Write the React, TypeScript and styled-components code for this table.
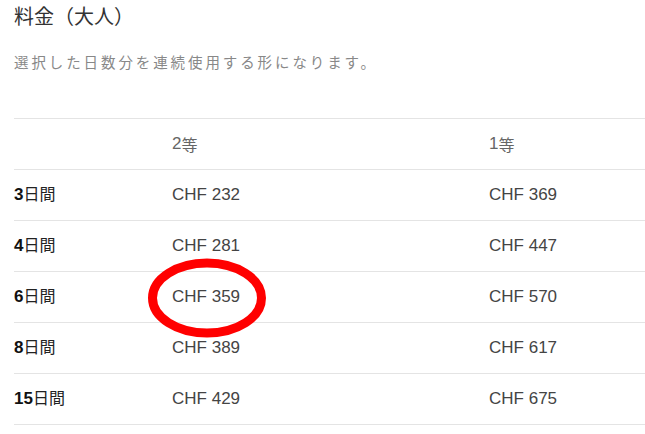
import React from "react";
import styled, { createGlobalStyle } from "styled-components";

const Global = createGlobalStyle`
  html, body { margin: 0; padding: 0; background: #fff; }
  body { font-family: "Liberation Sans", "Noto Sans CJK JP", sans-serif; }
`;

const Page = styled.div`
  padding: 0 0 0 14px;
  width: 645px;
  box-sizing: border-box;
`;

const Title = styled.h2`
  margin: 0;
  padding-top: 2px;
  font-family: "Noto Sans CJK JP", sans-serif;
  font-weight: 400;
  font-size: 20px;
  line-height: 28px;
  color: #333;
`;

const Lead = styled.p`
  margin: 20px 0 0;
  font-family: "Noto Sans CJK JP", sans-serif;
  font-size: 14.5px;
  line-height: 24px;
  letter-spacing: 2.9px;
  color: #888;
`;

const Table = styled.div`
  margin-top: 44px;
  display: grid;
  grid-template-columns: 158px 317px 1fr;
  border-top: 1px solid #e4e4e4;
`;

const Cell = styled.div<{ $head?: boolean }>`
  position: relative;
  height: 50px;
  display: flex;
  align-items: center;
  border-bottom: 1px solid #e4e4e4;
  font-family: "Liberation Sans", "Noto Sans CJK JP", sans-serif;
  font-size: 17px;
  line-height: 20px;
  color: ${(p) => (p.$head ? "#666" : "#444")};
`;

const Jp = styled.span`
  font-family: "Noto Sans CJK JP", sans-serif;
  font-size: 16px;
  line-height: 20px;
`;

const Num = styled.b`
  font-weight: 700;
  color: #111;
`;

const Label = styled.span`
  color: #222;
  line-height: 20px;
  margin-top: -3px;
`;

const Circle = styled.svg`
  position: absolute;
  left: -25px;
  top: -14px;
  width: 120px;
  height: 80px;
  pointer-events: none;
`;

const rows = [
  { d: "3", a: "232", b: "369" },
  { d: "4", a: "281", b: "447" },
  { d: "6", a: "359", b: "570", mark: true },
  { d: "8", a: "389", b: "617" },
  { d: "15", a: "429", b: "675" },
];

export default function App() {
  return (
    <>
      <Global />
      <Page>
        <Title>料金（大人）</Title>
        <Lead>選択した日数分を連続使用する形になります。</Lead>
        <Table>
          <Cell $head />
          <Cell $head>
            2<Jp>等</Jp>
          </Cell>
          <Cell $head>
            1<Jp>等</Jp>
          </Cell>
          {rows.map((r) => (
            <React.Fragment key={r.d}>
              <Cell>
                <Label>
                  <Num>{r.d}</Num>
                  <Jp>日間</Jp>
                </Label>
              </Cell>
              <Cell>
                CHF {r.a}
                {r.mark && (
                  <Circle viewBox="0 0 120 80">
                    <ellipse cx="60" cy="40" rx="54.5" ry="35" fill="none" stroke="#ff0000" strokeWidth="9" />
                  </Circle>
                )}
              </Cell>
              <Cell>CHF {r.b}</Cell>
            </React.Fragment>
          ))}
        </Table>
      </Page>
    </>
  );
}
